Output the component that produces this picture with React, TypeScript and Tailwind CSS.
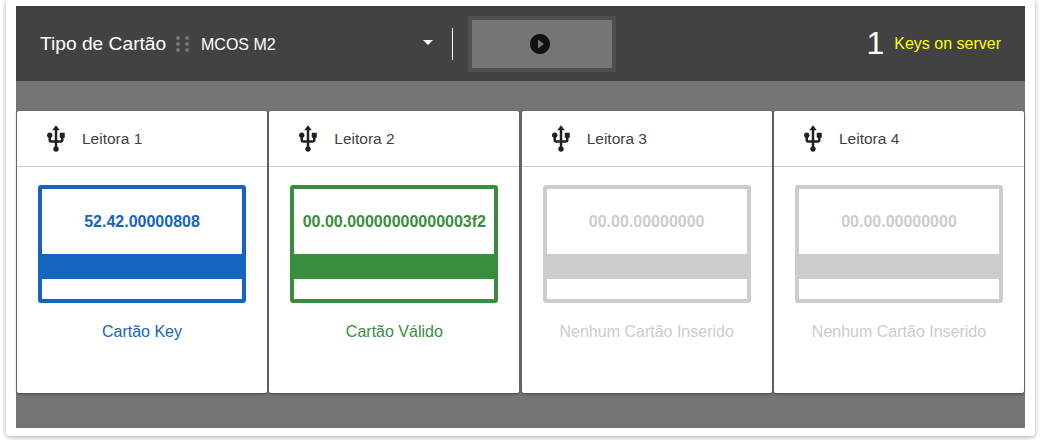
import React from 'react';

const UsbIcon = () => (
    <svg viewBox="0 0 24 24" className="h-[30px] w-[30px] fill-[#212121]">
        <path d="M15 7v4h1v2h-3V5h2l-3-4-3 4h2v8H8v-2.07c.7-.37 1.2-1.08 1.2-1.93 0-1.21-.99-2.2-2.2-2.2-1.21 0-2.2.99-2.2 2.2 0 .85.5 1.56 1.2 1.93V13c0 1.11.89 2 2 2h3v3.05c-.71.37-1.2 1.1-1.2 1.95 0 1.22.99 2.2 2.2 2.2 1.21 0 2.2-.98 2.2-2.2 0-.85-.49-1.58-1.2-1.95V15h3c1.11 0 2-.89 2-2v-2h1V7h-4z" />
    </svg>
);

const PlayIcon = () => (
    <svg viewBox="0 0 24 24" className="h-6 w-6 fill-[#111111]">
        <path d="M12 2C6.48 2 2 6.48 2 12s4.48 10 10 10 10-4.48 10-10S17.52 2 12 2zm-2 14.5v-9l6 4.5-6 4.5z" />
    </svg>
);

const readers = [
    { name: 'Leitora 1', code: '52.42.00000808', label: 'Cartão Key', border: 'border-[#1565c0]', bg: 'bg-[#1565c0]', text: 'text-[#1565c0]' },
    { name: 'Leitora 2', code: '00.00.00000000000003f2', label: 'Cartão Válido', border: 'border-[#388e3c]', bg: 'bg-[#388e3c]', text: 'text-[#388e3c]' },
    { name: 'Leitora 3', code: '00.00.00000000', label: 'Nenhum Cartão Inserido', border: 'border-[#cccccc]', bg: 'bg-[#cccccc]', text: 'text-[#cccccc]' },
    { name: 'Leitora 4', code: '00.00.00000000', label: 'Nenhum Cartão Inserido', border: 'border-[#cccccc]', bg: 'bg-[#cccccc]', text: 'text-[#cccccc]' },
];

const App = () => {
    return (
        <div className="h-[440px] w-[1043px] overflow-hidden bg-white pl-[6px] pr-2 font-['Liberation_Sans',Arial,sans-serif]">
            <div className="h-[436px] w-[1029px] rounded-b-[4px] bg-white px-[10px] pt-[6px] shadow-[0_1px_5px_rgba(0,0,0,0.35)]">
                {/* Top bar */}
                <div className="flex h-[75px] items-center bg-[#424242] pl-6 pr-6">
                    <span className="mt-px w-[126px] whitespace-nowrap text-[19.2px] text-white">Tipo de Cartão</span>
                    <div className="ml-[10px] grid grid-cols-2 gap-x-[5px] gap-y-[2px]">
                        {[0, 1, 2, 3, 4, 5].map((i) => (
                            <span key={i} className="h-1 w-1 rounded-full bg-[#757575]" />
                        ))}
                    </div>
                    <span className="ml-[12px] mt-[2px] w-[222px] text-base text-white">MCOS M2</span>
                    <span className="mb-[2px] h-0 w-0 border-x-[5px] border-t-[5px] border-x-transparent border-t-white" />
                    <span className="ml-[19px] h-8 w-px bg-white" />
                    <div className="ml-[15px] flex h-14 w-[148px] items-center justify-center border-4 border-[#4f4f4f] bg-[#757575] pr-1">
                        <PlayIcon />
                    </div>
                    <div className="ml-auto flex items-center gap-[10px]">
                        <span className="mb-[2px] text-[32px] leading-none text-white">1</span>
                        <span className="text-base text-[#ffff00]">Keys on server</span>
                    </div>
                </div>

                {/* Reader cards */}
                <div className="h-[347px] bg-[#757575] pl-px pt-[30px]">
                    <div className="flex gap-[2.33px]">
                        {readers.map((r) => (
                            <div key={r.name} className="h-[282px] w-[250px] rounded-[2px] bg-white shadow-[0_1px_3px_rgba(0,0,0,0.4)]">
                                <div className="flex h-[56px] items-center gap-[11px] border-b border-[#cccccc] pl-6">
                                    <UsbIcon />
                                    <span className="text-[15.5px] text-[#424242]">{r.name}</span>
                                </div>
                                <div className={`mx-[21px] mt-[18px] h-[118px] rounded-[3px] border-4 bg-white ${r.border}`}>
                                    <div className={`flex h-[65px] items-center justify-center text-base font-bold ${r.text}`}>{r.code}</div>
                                    <div className={`h-[25px] ${r.bg}`} />
                                </div>
                                <div className={`mt-[17px] text-center text-base ${r.text}`}>{r.label}</div>
                            </div>
                        ))}
                    </div>
                </div>
            </div>
        </div>
    );
};

export default App;
